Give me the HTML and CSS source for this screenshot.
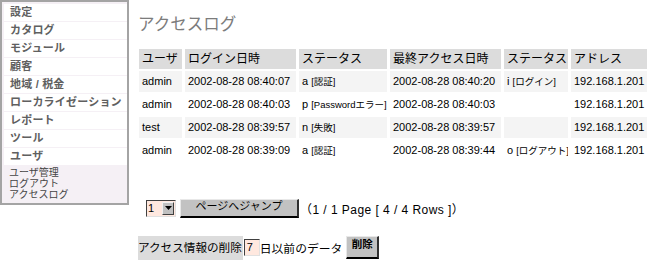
FILE: index.html
```html
<!DOCTYPE html>
<html lang="ja">
<head>
<meta charset="utf-8">
<title>アクセスログ</title>
<link rel="stylesheet" href="styles.css">
</head>
<body>
<div class="page">
  <nav class="sidebar">
    <div class="menu-item">設定</div>
    <div class="menu-item">カタログ</div>
    <div class="menu-item">モジュール</div>
    <div class="menu-item">顧客</div>
    <div class="menu-item">地域 / 税金</div>
    <div class="menu-item">ローカライゼーション</div>
    <div class="menu-item">レポート</div>
    <div class="menu-item">ツール</div>
    <div class="menu-item">ユーザ</div>
    <div class="submenu">
      <div class="sub-item">ユーザ管理</div>
      <div class="sub-item">ログアウト</div>
      <div class="sub-item">アクセスログ</div>
    </div>
  </nav>
  <main class="main">
    <h1 class="title">アクセスログ</h1>
    <table class="log">
      <thead>
        <tr>
          <th class="c1">ユーザ</th>
          <th class="c2">ログイン日時</th>
          <th class="c3">ステータス</th>
          <th class="c4">最終アクセス日時</th>
          <th class="c5">ステータス</th>
          <th class="c6">アドレス</th>
        </tr>
      </thead>
      <tbody>
        <tr class="odd">
          <td>admin</td>
          <td>2002-08-28 08:40:07</td>
          <td>a <span class="st">[認証]</span></td>
          <td>2002-08-28 08:40:20</td>
          <td>i <span class="st">[ログイン]</span></td>
          <td>192.168.1.201</td>
        </tr>
        <tr class="even">
          <td>admin</td>
          <td>2002-08-28 08:40:03</td>
          <td>p <span class="st">[Passwordエラー]</span></td>
          <td>2002-08-28 08:40:03</td>
          <td></td>
          <td>192.168.1.201</td>
        </tr>
        <tr class="odd">
          <td>test</td>
          <td>2002-08-28 08:39:57</td>
          <td>n <span class="st">[失敗]</span></td>
          <td>2002-08-28 08:39:57</td>
          <td></td>
          <td>192.168.1.201</td>
        </tr>
        <tr class="even">
          <td>admin</td>
          <td>2002-08-28 08:39:09</td>
          <td>a <span class="st">[認証]</span></td>
          <td>2002-08-28 08:39:44</td>
          <td>o <span class="st">[ログアウト]</span></td>
          <td>192.168.1.201</td>
        </tr>
      </tbody>
    </table>
    <div class="pager">
      <div class="select">
        <span class="select-value">1</span>
        <span class="select-btn"><svg width="7" height="4" viewBox="0 0 7 4"><path d="M0 0H7L3.5 4Z" fill="#000"/></svg></span>
      </div>
      <div class="btn jump">ページへジャンプ</div>
      <span class="pager-info">（1 / 1 Page [ 4 / 4 Rows ]）</span>
    </div>
    <div class="delete-row">
      <span class="delete-label">アクセス情報の削除</span>
      <span class="days-input">7</span>
      <span class="delete-text">日以前のデータ</span>
      <div class="btn del">削除</div>
    </div>
  </main>
</div>
</body>
</html>
```
FILE: styles.css
```css
html, body {
  margin: 0;
  padding: 0;
  background: #fff;
}
body {
  font-family: "Liberation Sans", "Noto Sans CJK JP", sans-serif;
  font-size: 12px;
  color: #000;
}
.page {
  display: flex;
  align-items: flex-start;
  width: 649px;
}
.sidebar {
  width: 123px;
  border: 2px solid #a4a4a4;
  background: #f5f0f5;
  padding: 2px 0 3px 2px;
  flex: none;
}
.menu-item {
  height: 17px;
  line-height: 17px;
  margin-bottom: 1px;
  background: #fff;
  padding-left: 6px;
  font-size: 11px;
  font-weight: bold;
  color: #606060;
  letter-spacing: 0.2px;
  white-space: nowrap;
}
.submenu {
  padding: 1px 0 0 5px;
}
.sub-item {
  font-size: 10px;
  line-height: 11px;
  height: 11px;
  color: #444;
  white-space: nowrap;
}
.main {
  flex: 1;
  min-width: 0;
  padding-left: 7px;
}
.title {
  margin: 13px 0 0 2px;
  font-size: 16.5px;
  line-height: 20px;
  font-weight: normal;
  color: #7c7c7c;
  font-family: "Noto Sans CJK JP", sans-serif;
}
.log {
  margin-top: 14px;
  border-collapse: separate;
  border-spacing: 3px 2px;
  table-layout: fixed;
  width: 514px;
}
.log th {
  background: #dcdcdc;
  font-weight: normal;
  font-size: 12px;
  text-align: left;
  height: 20px;
  padding: 0 0 0 3px;
  line-height: 20px;
  white-space: nowrap;
  overflow: hidden;
}
.log td {
  height: 21px;
  padding: 0 0 0 3px;
  font-size: 11px;
  line-height: 21px;
  white-space: nowrap;
  overflow: hidden;
}
.log .odd td { background: #f4f4f4; }
.log .even td { background: #fff; }
.c1 { width: 40px; }
.c2 { width: 108px; }
.c3 { width: 85px; }
.c4 { width: 108px; }
.c5 { width: 61px; }
.c6 { width: 73px; }
.st {
  font-size: 9.5px;
}
.pager {
  display: flex;
  align-items: center;
  margin: 35px 0 0 10px;
  height: 20px;
}
.select {
  display: flex;
  width: 28px;
  height: 15px;
  border-top: 1px solid #404040;
  border-left: 1px solid #404040;
  border-right: 1px solid #e0e0e0;
  border-bottom: 1px solid #e0e0e0;
  background: #ffe8df;
  margin-right: 4px;
}
.select-value {
  width: 13px;
  font-size: 11px;
  line-height: 15px;
  padding-left: 1px;
}
.select-btn {
  width: 12px;
  height: 13px;
  margin-top: 1px;
  background: #c0c0c0;
  border-top: 1px solid #f0f0f0;
  border-left: 1px solid #f0f0f0;
  border-right: 1px solid #404040;
  border-bottom: 1px solid #404040;
  box-sizing: border-box;
  display: flex;
  align-items: center;
  justify-content: center;
  margin-left: 1px;
}
.btn {
  background: #c2c2c2;
  border-top: 1px solid #e8e8e8;
  border-left: 1px solid #e8e8e8;
  border-right: 2px solid #303030;
  border-bottom: 2px solid #000;
  box-sizing: border-box;
  font-size: 11px;
  text-align: center;
  color: #000;
}
.jump {
  width: 119px;
  height: 19px;
  line-height: 12px;
}
.pager-info {
  margin-left: 1px;
  font-size: 12px;
  letter-spacing: 0.45px;
  white-space: nowrap;
}
.delete-row {
  display: flex;
  align-items: center;
  margin: 17px 0 0 2px;
  height: 25px;
}
.delete-label {
  background: #dcdcdc;
  font-size: 11.6px;
  line-height: 24px;
  height: 24px;
  padding: 0 1px 0 0;
  white-space: nowrap;
}
.days-input {
  width: 12px;
  height: 15px;
  margin-left: 1px;
  background: #ffe8df;
  border-top: 1px solid #404040;
  border-left: 1px solid #404040;
  border-right: 1px solid #e0e0e0;
  border-bottom: 1px solid #e0e0e0;
  font-size: 11px;
  line-height: 15px;
  padding-left: 2px;
}
.delete-text {
  margin-left: 0;
  font-size: 11.8px;
  white-space: nowrap;
}
.del {
  width: 33px;
  height: 23px;
  margin-left: 4px;
  line-height: 15px;
  font-weight: bold;
  font-size: 10.5px;
}
```
